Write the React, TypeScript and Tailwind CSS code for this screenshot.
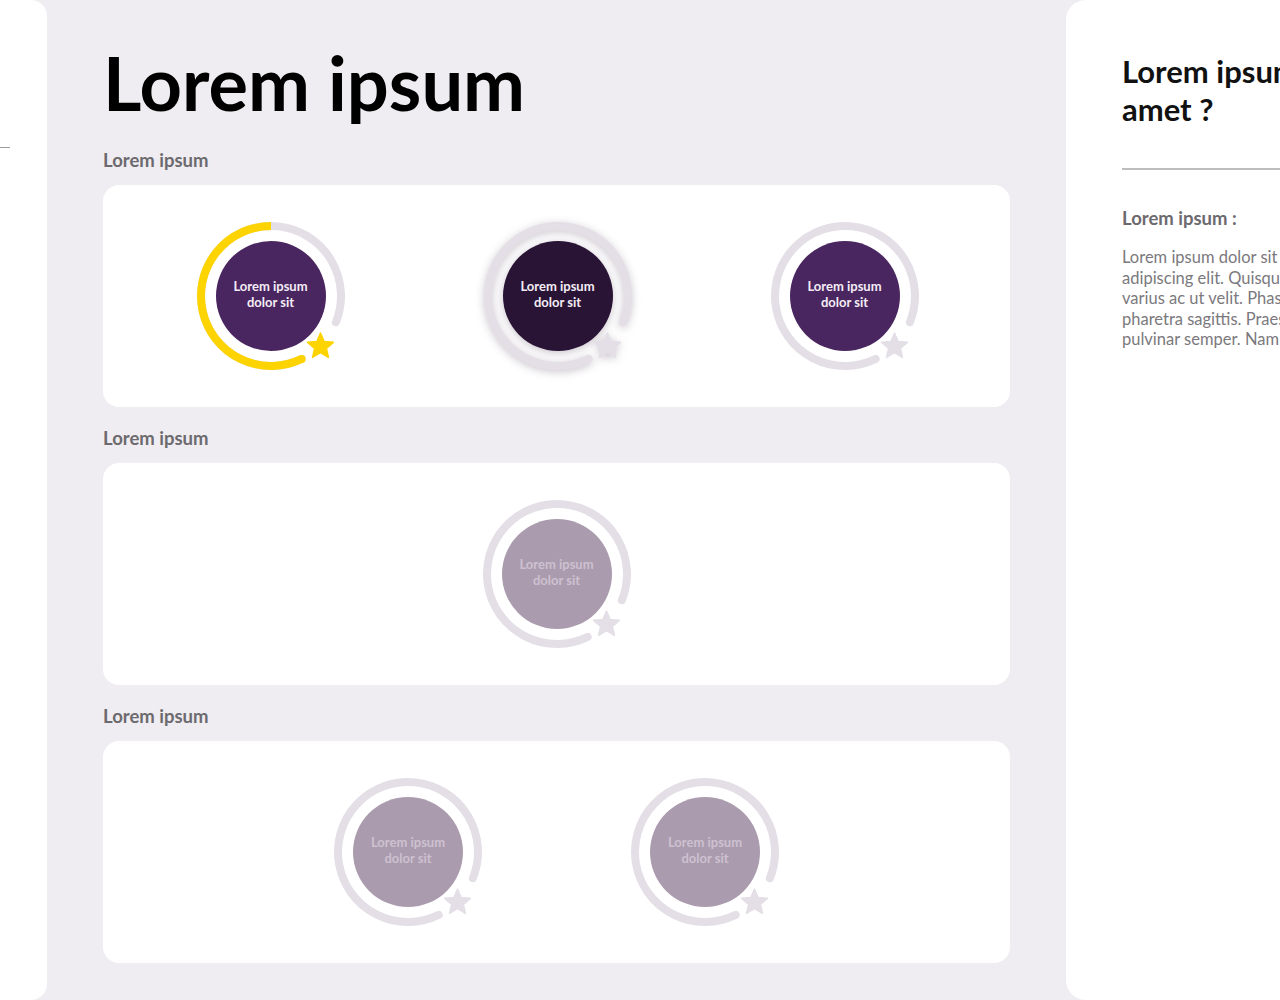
import React from "react";

type Variant = "progress" | "dark" | "purple" | "faded";

const RING = "#e4dfe7";
const CX = 80;
const R = 70;

function pt(angleDeg: number, r = R) {
  const a = ((angleDeg - 90) * Math.PI) / 180;
  return { x: CX + r * Math.cos(a), y: CX + r * Math.sin(a) };
}

function arc(from: number, to: number) {
  const s = pt(from);
  const e = pt(to);
  const sweep = to - from;
  const large = sweep > 180 ? 1 : 0;
  return `M ${s.x} ${s.y} A ${R} ${R} 0 ${large} 1 ${e.x} ${e.y}`;
}

function starPath(cx: number, cy: number, ro: number, ri: number) {
  const pts: string[] = [];
  for (let i = 0; i < 10; i++) {
    const r = i % 2 === 0 ? ro : ri;
    const a = ((i * 36 - 90) * Math.PI) / 180;
    pts.push(`${(cx + r * Math.cos(a)).toFixed(2)},${(cy + r * Math.sin(a)).toFixed(2)}`);
  }
  return "M" + pts.join(" L") + " Z";
}

function Badge({ variant }: { variant: Variant }) {
  const inner =
    variant === "dark" ? "#2a1436" : variant === "faded" ? "#ab9bae" : "#4a2660";
  const textColor = variant === "faded" ? "#cdc1d0" : "#f3ecf5";
  const star = pt(135);
  const yellowEnd = pt(154);
  return (
    <div className="relative h-[160px] w-[160px] shrink-0">
      <svg
        width="160"
        height="160"
        viewBox="0 0 160 160"
        className="absolute inset-0"
        style={variant === "dark" ? { filter: "drop-shadow(0px 2px 4px rgba(60,40,70,0.28))" } : undefined}
      >
        <path d={arc(154, 472)} fill="none" stroke={RING} strokeWidth="8" strokeLinecap="round" />
        {variant === "progress" && (
          <>
            <path d={arc(154, 360)} fill="none" stroke="#fdd300" strokeWidth="8" strokeLinecap="butt" />
            <circle cx={yellowEnd.x} cy={yellowEnd.y} r="4" fill="#fdd300" />
          </>
        )}
        <path
          d={starPath(star.x, star.y + 1, 13.5, 6.2)}
          fill={variant === "progress" ? "#fdd300" : RING}
          stroke={variant === "progress" ? "#fdd300" : RING}
          strokeWidth="1.5"
          strokeLinejoin="round"
        />
        <circle cx={CX} cy={CX} r="55" fill={inner} />
      </svg>
      <div
        className="absolute inset-0 flex flex-col items-center justify-center pb-[4px] text-[13px] font-bold leading-[16px]"
        style={{ color: textColor }}
      >
        <span>Lorem ipsum</span>
        <span>dolor sit</span>
      </div>
    </div>
  );
}

function Label({ children }: { children: React.ReactNode }) {
  return (
    <div className="mb-[14px] h-[22px] text-[18.5px] font-bold leading-[22px] text-[#6c6a6e]">{children}</div>
  );
}

export default function App() {
  return (
    <div
      className="flex h-[1000px] w-[1280px] overflow-hidden bg-[#efedf1]"
      style={{ fontFamily: "Lato, 'Noto Sans', sans-serif" }}
    >
      {/* left rail */}
      <div className="relative h-full w-[47px] shrink-0 rounded-r-[16px] bg-white">
        <div className="absolute left-0 top-[147px] h-px w-[10px] bg-[#9c9c9c]" />
      </div>

      {/* main */}
      <div className="flex w-[1019px] shrink-0 flex-col px-[56px]">
        <h1 className="mt-[41px] mb-[24px] text-[74px] font-bold leading-[84px] text-black">
          Lorem ipsum
        </h1>
        <Label>Lorem ipsum</Label>
        <div className="mb-[20px] flex h-[222px] items-center justify-center gap-[127px] rounded-[16px] bg-white pl-[2px]">
          <Badge variant="progress" />
          <Badge variant="dark" />
          <Badge variant="purple" />
        </div>
        <Label>Lorem ipsum</Label>
        <div className="mb-[20px] flex h-[222px] items-center justify-center rounded-[16px] bg-white">
          <Badge variant="faded" />
        </div>
        <Label>Lorem ipsum</Label>
        <div className="flex h-[222px] items-center justify-center gap-[137px] rounded-[16px] bg-white">
          <Badge variant="faded" />
          <Badge variant="faded" />
        </div>
      </div>

      {/* right panel */}
      <div className="h-full w-[320px] shrink-0 overflow-hidden rounded-l-[20px] bg-white pl-[56px]">
        <h2 className="mt-[52px] whitespace-nowrap text-[31px] font-bold leading-[38px] text-[#111]">
          Lorem ipsum dolor sit
          <br />
          amet ?
        </h2>
        <div className="mt-[40px] h-[2px] w-full bg-[#bdbcbf]" />
        <div className="mt-[37px] text-[18.5px] font-bold leading-[22px] text-[#6c6a6e]">Lorem ipsum :</div>
        <p className="mt-[18px] whitespace-nowrap text-[16.5px] leading-[20.5px] text-[#7b797d]">
          Lorem ipsum dolor sit amet, consectetur
          <br />
          adipiscing elit. Quisque viverra est
          <br />
          varius ac ut velit. Phasellus vel
          <br />
          pharetra sagittis. Praesent nec
          <br />
          pulvinar semper. Nam dictum
        </p>
      </div>
    </div>
  );
}
